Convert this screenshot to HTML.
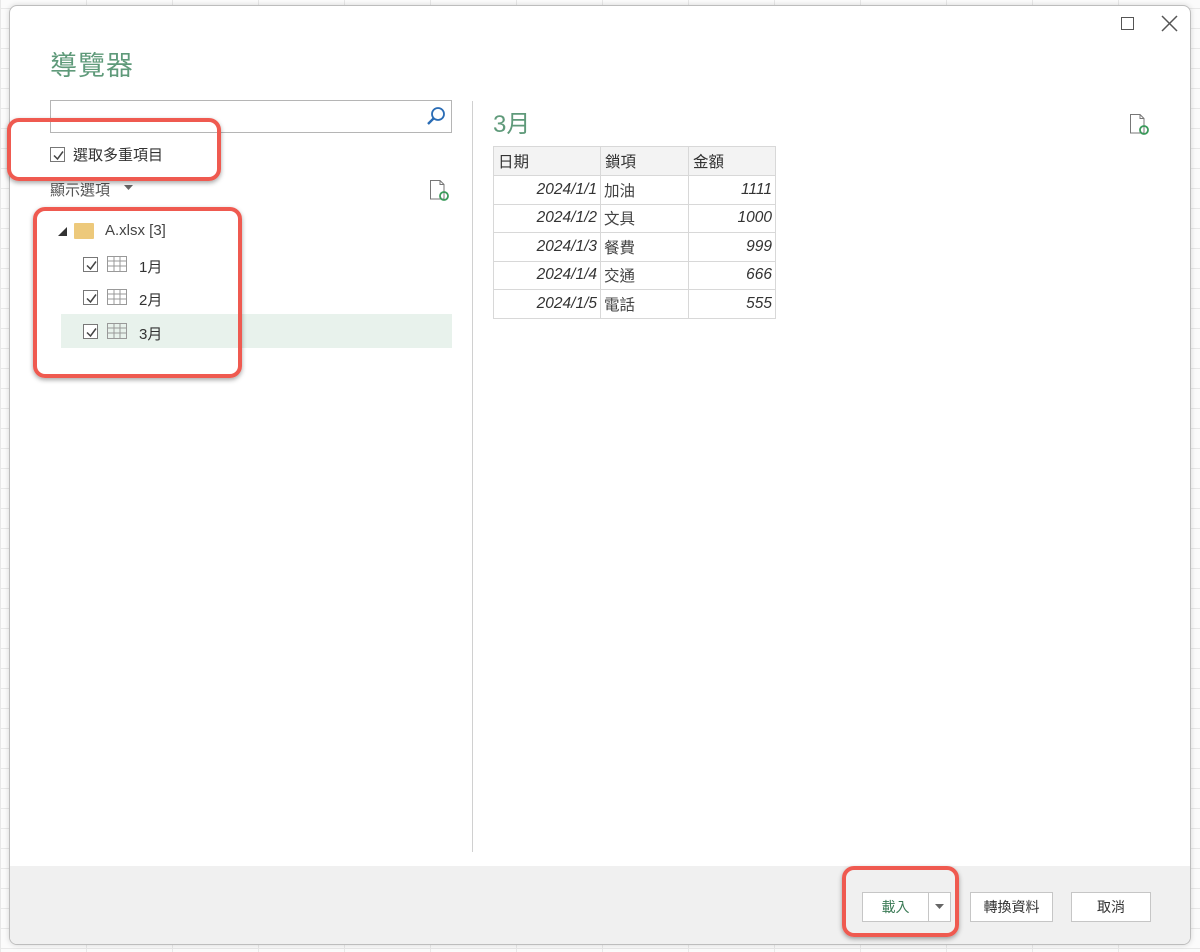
<!DOCTYPE html>
<html><head><meta charset="utf-8"><style>
*{margin:0;padding:0;box-sizing:border-box}
body{width:1200px;height:952px;position:relative;overflow:hidden;background:#fbfbfb;font-family:"Liberation Sans","Noto Sans CJK TC",sans-serif;color:#333}
.a{position:absolute}
.grid{position:absolute;left:0;top:0;width:1200px;height:952px;background-image:linear-gradient(#e8e8e8 1px,transparent 1px),linear-gradient(90deg,#e8e8e8 1px,transparent 1px);background-size:86px 20px;background-position:0 8px}
.dlg{left:9px;top:5px;width:1182px;height:940px;background:#fff;border:1px solid #bdbdbd;border-radius:8px;overflow:hidden;box-shadow:0 0 6px rgba(0,0,0,.15)}
.foot{left:0;top:860px;width:100%;height:80px;background:#f0f0f0}
.red{position:absolute;border:4px solid #ef5a50;border-radius:12px;box-shadow:0 2px 5px rgba(0,0,0,.35)}
.cb{position:absolute;width:15px;height:15px;border:1px solid #777;background:#fff}
.cb svg{position:absolute;left:1px;top:1px}
table{border-collapse:collapse;font-size:15.5px}
td{border:1px solid #d8d8d8;height:28.5px;padding:0 3px;color:#444}
th{border:1px solid #d8d8d8;background:#f3f3f3;height:29px;font-weight:normal;text-align:left;padding:0 4px;color:#333;font-size:15.5px}
td.n{text-align:right;font-style:italic;color:#333}
.btn{position:absolute;height:30px;border:1px solid #c6c6c6;background:#fff;font-size:14px;text-align:center;line-height:28px;color:#333}
.tbl{position:absolute;width:20px;height:18px}
</style></head><body>
<div class="grid"></div>
<div class="a dlg">
  <div class="a foot"></div>
  <div class="a" style="left:1111px;top:11px;width:13px;height:13px;border:1.5px solid #555"></div>
  <svg class="a" style="left:1151px;top:9px" width="17" height="17"><path d="M1 1L16 16M16 1L1 16" stroke="#555" stroke-width="1.5"/></svg>
  <div class="a" style="left:40px;top:38px;font-size:27px;color:#5f9a7a;letter-spacing:1px">導覽器</div>
  <div class="a" style="left:40px;top:94px;width:402px;height:33px;border:1px solid #b5b5b5"></div>
  <svg class="a" style="left:416px;top:100px" width="20" height="20"><circle cx="12" cy="8" r="6" fill="none" stroke="#2a6cb5" stroke-width="1.8"/><path d="M7.5 12.5L2 18" stroke="#2a6cb5" stroke-width="2.4"/></svg>
  <div class="cb" style="left:40px;top:141px"><svg width="13" height="13"><path d="M2 6.5L5.5 10L11 2.5" fill="none" stroke="#444" stroke-width="1.5"/></svg></div>
  <div class="a" style="left:63px;top:138px;font-size:15px;color:#333">選取多重項目</div>
  <div class="a" style="left:40px;top:173px;font-size:15px;color:#555">顯示選項</div>
  <svg class="a" style="left:114px;top:179px" width="9" height="6"><path d="M0 0H9L4.5 5z" fill="#666"/></svg>
  <svg class="a" style="left:419px;top:173px" width="22" height="24"><path d="M1.5 1.5H11L15 5.5V20H1.5z" fill="#fff" stroke="#777"/><path d="M11 1.5V5.5H15" fill="none" stroke="#777"/><circle cx="15" cy="17" r="4" fill="none" stroke="#3a9a5a" stroke-width="1.8"/></svg>
  <svg class="a" style="left:48px;top:221px" width="9" height="9"><path d="M9 0V9H0z" fill="#333"/></svg>
  <div class="a" style="left:64px;top:217px;width:20px;height:16px;background:#edc97b;border-radius:1px"></div>
  <div class="a" style="left:95px;top:216px;font-size:15px;color:#444">A.xlsx [3]</div>
  <div class="a" style="left:51px;top:308px;width:391px;height:34px;background:#e8f2ec"></div>
  <div class="cb" style="left:73px;top:251px"><svg width="13" height="13"><path d="M2 6.5L5.5 10L11 2.5" fill="none" stroke="#444" stroke-width="1.5"/></svg></div>
  <div class="cb" style="left:73px;top:284px"><svg width="13" height="13"><path d="M2 6.5L5.5 10L11 2.5" fill="none" stroke="#444" stroke-width="1.5"/></svg></div>
  <div class="cb" style="left:73px;top:318px"><svg width="13" height="13"><path d="M2 6.5L5.5 10L11 2.5" fill="none" stroke="#444" stroke-width="1.5"/></svg></div>
  <svg class="tbl" style="left:97px;top:250px" viewBox="0 0 20 18"><path d="M.5 .5H19.5V15.5H.5zM.5 5H19.5M.5 10H19.5M7 .5V15.5M13 .5V15.5" fill="none" stroke="#999"/></svg>
  <svg class="tbl" style="left:97px;top:283px" viewBox="0 0 20 18"><path d="M.5 .5H19.5V15.5H.5zM.5 5H19.5M.5 10H19.5M7 .5V15.5M13 .5V15.5" fill="none" stroke="#999"/></svg>
  <svg class="tbl" style="left:97px;top:317px" viewBox="0 0 20 18"><path d="M.5 .5H19.5V15.5H.5zM.5 5H19.5M.5 10H19.5M7 .5V15.5M13 .5V15.5" fill="none" stroke="#999"/></svg>
  <div class="a" style="left:129px;top:250px;font-size:15px;color:#333">1月</div>
  <div class="a" style="left:129px;top:283px;font-size:15px;color:#333">2月</div>
  <div class="a" style="left:129px;top:317px;font-size:15px;color:#333">3月</div>
  <div class="a" style="left:462px;top:95px;width:1px;height:751px;background:#d0d0d0"></div>
  <div class="a" style="left:483px;top:98px;font-size:24px;color:#5f9a7a">3月</div>
  <svg class="a" style="left:1119px;top:107px" width="22" height="24"><path d="M1.5 1.5H11L15 5.5V20H1.5z" fill="#fff" stroke="#777"/><path d="M11 1.5V5.5H15" fill="none" stroke="#777"/><circle cx="15" cy="17" r="4" fill="none" stroke="#3a9a5a" stroke-width="1.8"/></svg>
  <table class="a" style="left:483px;top:140px;width:283px">
    <tr><th style="width:107px">日期</th><th style="width:88px">鎖項</th><th>金額</th></tr>
    <tr><td class="n">2024/1/1</td><td>加油</td><td class="n">1111</td></tr>
    <tr><td class="n">2024/1/2</td><td>文具</td><td class="n">1000</td></tr>
    <tr><td class="n">2024/1/3</td><td>餐費</td><td class="n">999</td></tr>
    <tr><td class="n">2024/1/4</td><td>交通</td><td class="n">666</td></tr>
    <tr><td class="n">2024/1/5</td><td>電話</td><td class="n">555</td></tr>
  </table>
  <div class="btn" style="left:852px;top:886px;width:67px;color:#3a7a55">載入</div>
  <div class="btn" style="left:918px;top:886px;width:23px"><svg width="9" height="6" style="margin-top:11px;display:block;margin-left:6px"><path d="M0 0H9L4.5 5z" fill="#666"/></svg></div>
  <div class="btn" style="left:960px;top:886px;width:83px">轉換資料</div>
  <div class="btn" style="left:1061px;top:886px;width:80px">取消</div>
</div>
<div class="red" style="left:7px;top:118px;width:214px;height:63px"></div>
<div class="red" style="left:33px;top:207px;width:209px;height:171px"></div>
<div class="red" style="left:842px;top:866px;width:117px;height:71px"></div>
</body></html>
